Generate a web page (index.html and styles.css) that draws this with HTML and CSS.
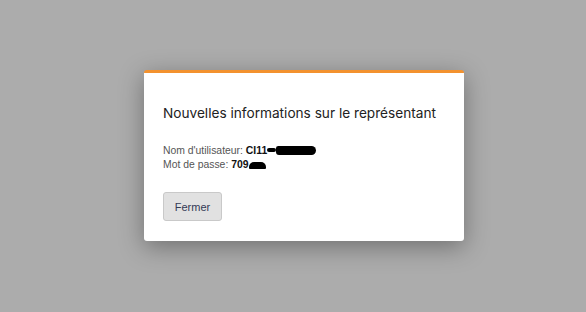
FILE: index.html
```html
<!DOCTYPE html>
<html lang="fr">
<head>
<meta charset="utf-8">
<link rel="stylesheet" href="styles.css">
</head>
<body>
<div class="overlay">
  <div class="modal">
    <h2 class="title">Nouvelles informations sur le représentant</h2>
    <div class="info">
      <div class="row">Nom d'utilisateur: <b>CI11</b><span class="redact redact-thin"></span><span class="redact redact-long"></span></div>
      <div class="row">Mot de passe: <b>709</b><span class="redact redact-short"></span></div>
    </div>
    <button class="btn">Fermer</button>
  </div>
</div>
</body>
</html>
```
FILE: styles.css
```css
html, body {
  margin: 0;
  padding: 0;
  height: 100%;
  background: #acacac;
}
.overlay {
  height: 312px;
  display: flex;
  align-items: flex-start;
  padding: 70px 0 0 144px;
  box-sizing: border-box;
}
.modal {
  width: 320px;
  box-sizing: border-box;
  background: #fff;
  border-top: 3px solid #f3922f;
  border-radius: 3px;
  box-shadow: 0 6px 24px rgba(0,0,0,0.35);
  padding: 30px 19px 20px 19px;
}
.title {
  margin: 0;
  font-family: Inter, "Liberation Sans", sans-serif;
  font-weight: 400;
  font-size: 13.65px;
  line-height: 20px;
  color: #222;
  white-space: nowrap;
}
.info {
  margin-top: 21px;
  font-family: "Liberation Sans", Arial, sans-serif;
  font-size: 10.4px;
  line-height: 13.5px;
  color: #555;
}
.row b {
  color: #111;
}
.redact {
  display: inline-block;
  background: #000;
  vertical-align: 0;
}
.redact-thin {
  width: 9px;
  height: 4px;
  border-radius: 2px;
  vertical-align: 2px;
}
.redact-long {
  width: 40px;
  height: 9px;
  border-radius: 3px 6px 6px 4px;
  vertical-align: -1px;
}
.redact-short {
  width: 17px;
  height: 7px;
  border-radius: 5px 5px 1px 1px;
  vertical-align: -1px;
}
.btn {
  margin-top: 21px;
  width: 59px;
  height: 29px;
  background: #e1e1e1;
  border: 1px solid #c9c9c9;
  border-radius: 3px;
  font-family: "Liberation Sans", Arial, sans-serif;
  font-size: 11px;
  color: #333a55;
  padding: 0;
}
```
